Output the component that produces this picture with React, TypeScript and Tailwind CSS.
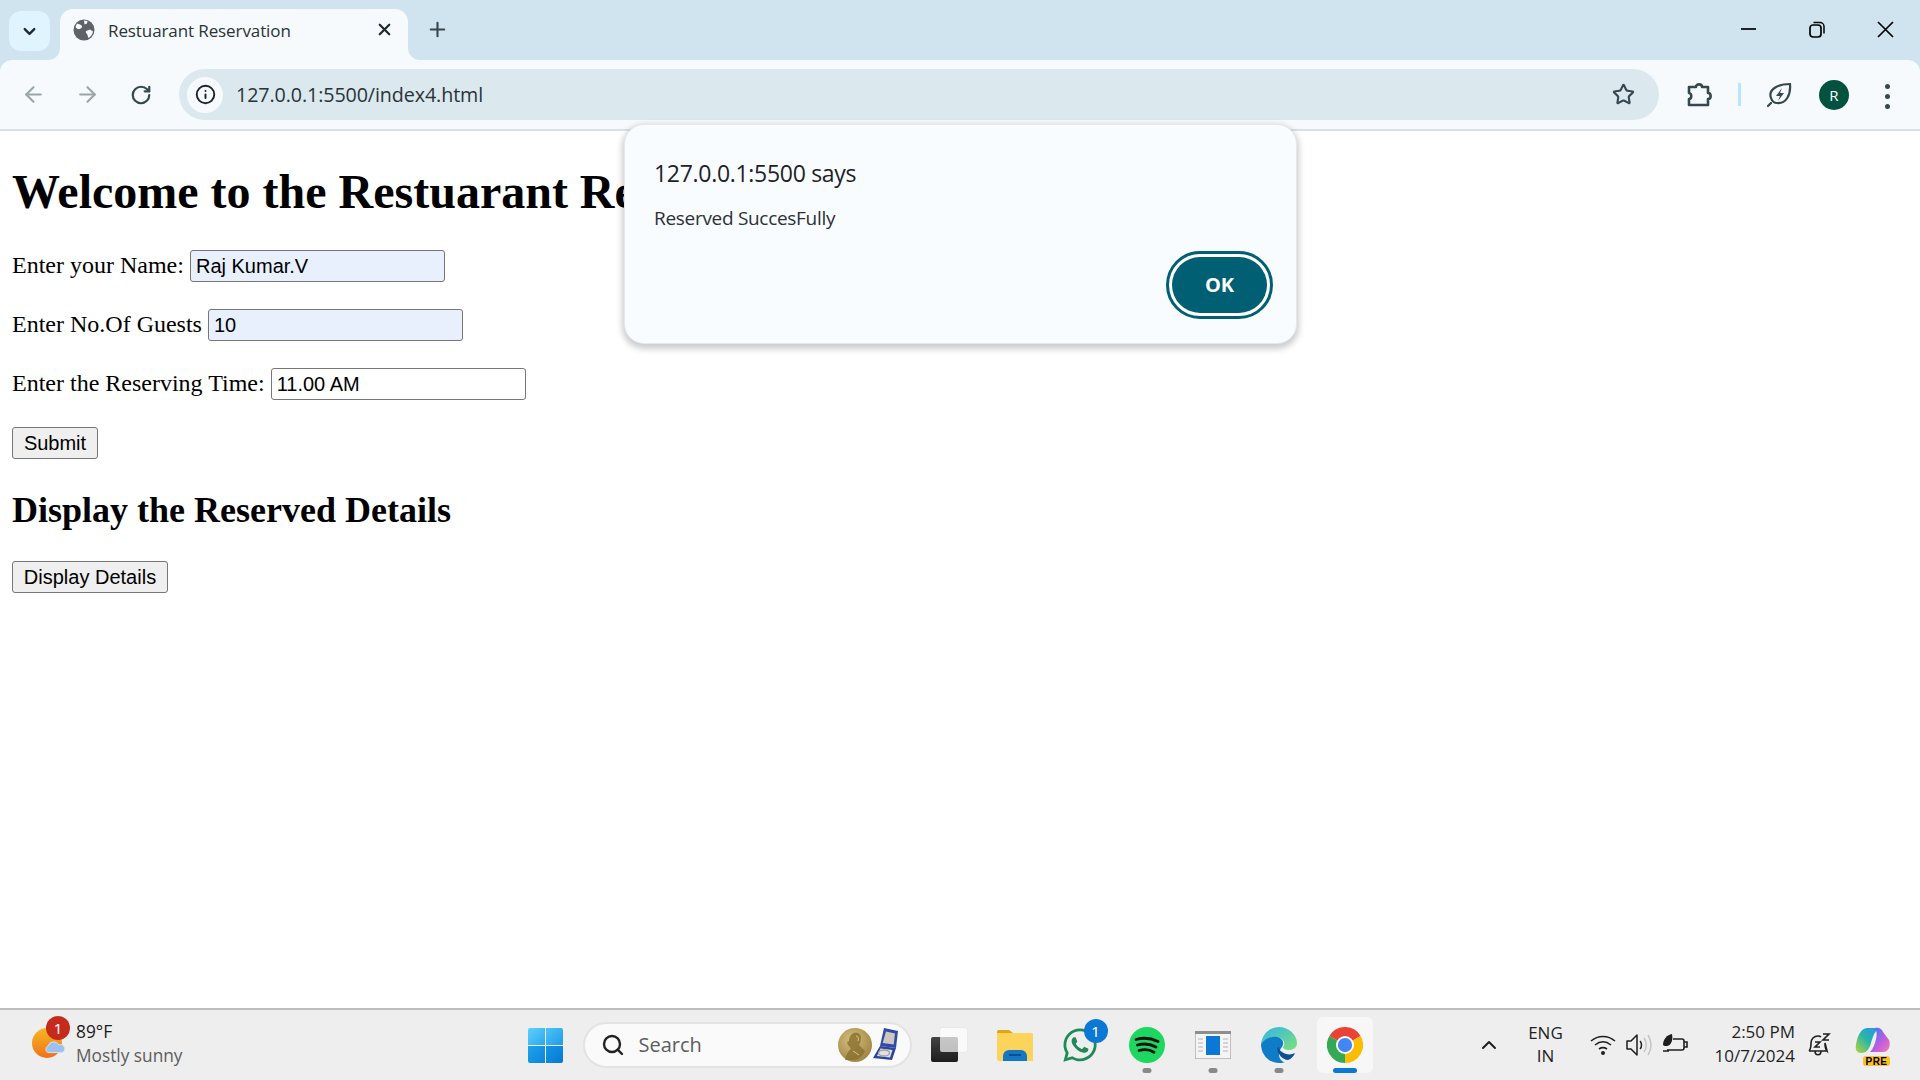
import React from "react";
import { ArrowLeft, ArrowRight, ChevronDown, ChevronUp, Info, Plus, RotateCw, Search, Star, X } from "lucide-react";
import { FaWhatsapp } from "react-icons/fa";

const uiFont = "font-['Open_Sans','Noto_Sans',sans-serif]";

function TabFlare({ side }: { side: "left" | "right" }) {
  return (
    <svg
      width="12"
      height="12"
      viewBox="0 0 12 12"
      className={side === "left" ? "absolute bottom-0 left-[-12px]" : "absolute bottom-0 right-[-12px]"}>
      {side === "left" ? <path d="M12 0v12H0A12 12 0 0 0 12 0z" fill="#f6fafd" /> : <path d="M0 0v12h12A12 12 0 0 1 0 0z" fill="#f6fafd" />}
    </svg>
  );
}

function Favicon() {
  return (
    <svg width="22" height="22" viewBox="0 0 22 22">
      <circle cx="11" cy="11" r="10.500" fill="#5f6368" />
      <path d="M4 4.500c2 1 3 .5 4.500 2s-.5 3-2 3.500-3-.5-4-2zM13 12l4-1.500 3 2c-.5 3-2 5-4.500 6.500-1-1-.5-3-1.500-4s-1.500-2-1-3zM11 1.500l3.500.5-.5 2.500-2.500 1z" fill="#f6fafd" />
    </svg>
  );
}

function TabStrip() {
  return (
    <div className="flex h-[60px] shrink-0 bg-[#cfe4ef]">
      <div className="mt-[11px] ml-[9px] flex h-[40px] w-[41px] items-center justify-center rounded-[12px] bg-[#dff4fe]">
        <ChevronDown size={19} strokeWidth={3} className="text-[#1f2a30]" />
      </div>
      <div className="relative mt-[9px] ml-[10px] flex h-[51px] w-[348px] items-start rounded-t-[13px] bg-[#f6fafd] pt-[10px] pl-[13px]">
        <TabFlare side="left" />
        <TabFlare side="right" />
        <Favicon />
        <span className={`ml-[13px] mt-[1px] text-[17px] leading-[22px] tracking-[-0.1px] text-[#2a3338] ${uiFont}`}>Restuarant Reservation</span>
        <X size={19} strokeWidth={2.800} className="ml-auto mr-[14px] mt-[1px] text-[#1f2a30]" />
      </div>
      <Plus size={23} strokeWidth={2.200} className="ml-[18px] mt-[18px] text-[#37474f]" />
      <div className="ml-auto mr-[24px] flex items-start gap-[47px] pt-[19px]">
        <svg width="21" height="21" viewBox="0 0 21 21">
          <path d="M2 10h15" stroke="#000" strokeWidth="1.700" />
        </svg>
        <svg width="21" height="21" viewBox="0 0 21 21">
          <rect x="3" y="6" width="11" height="12" rx="3" fill="none" stroke="#000" strokeWidth="1.700" />
          <path d="M6.500 3.500h6.500a4 4 0 0 1 4 4v7" fill="none" stroke="#000" strokeWidth="1.500" />
        </svg>
        <svg width="21" height="21" viewBox="0 0 21 21">
          <path d="M3 3l15 15M18 3L3 18" stroke="#000" strokeWidth="1.700" />
        </svg>
      </div>
    </div>
  );
}

function Toolbar() {
  return (
    <div className="flex h-[71px] shrink-0 items-start rounded-t-[12px] border-b-2 border-[#d5e2e8] bg-[#f6fafd] pl-[21px]">
      <ArrowLeft size={25} strokeWidth={2} className="mt-[22px] text-[#9ba6aa]" />
      <ArrowRight size={25} strokeWidth={2} className="ml-[29px] mt-[22px] text-[#9ba6aa]" />
      <RotateCw size={22} strokeWidth={2.400} className="ml-[30px] mt-[24px] text-[#37474f]" />
      <div className="ml-[27px] mt-[9px] flex h-[51px] w-[1480px] items-center rounded-full bg-[#dbe9ee] pl-[8px]">
        <div className="flex h-[36px] w-[36px] items-center justify-center rounded-full bg-[#f6fafd]">
          <Info size={21} strokeWidth={2.200} className="text-[#1d2528]" />
        </div>
        <span className={`ml-[13px] text-[19.7px] tracking-[-0.1px] text-[#2a3338] ${uiFont}`}>127.0.0.1:5500/index4.html</span>
        <Star size={23} strokeWidth={2.200} className="ml-auto mr-[24px] text-[#37474f]" />
      </div>
      <svg width="28" height="28" viewBox="0 0 28 28" className="ml-[26px] mt-[20px]">
        <path d="M4 7h7c0-3.500 6-3.500 6 0h6v6c3.500 0 3.500 6 0 6v6H4v-6c3 0 3-6 0-6z" fill="none" stroke="#37474f" strokeWidth="2.600" strokeLinejoin="round" />
      </svg>
      <div className="ml-[25px] mt-[23px] h-[23px] w-[3px] bg-[#b9e6fb]" />
      <svg width="26" height="26" viewBox="0 0 26 26" className="ml-[26px] mt-[21px]">
        <path d="M4 17C1 9 10 3 23 3c1 11-4 20-13 19-3 0-5-2-6-5zM1 25l3-3" fill="none" stroke="#37474f" strokeWidth="2.200" strokeLinecap="round" />
        <path d="M15 7l-6 8h4l-2 5 6-8h-4z" fill="#37474f" />
      </svg>
      <div className="ml-[26px] mt-[20px] flex h-[30px] w-[30px] items-center justify-center rounded-full bg-[#02523f] text-[15px] text-white">
        <span className={uiFont}>R</span>
      </div>
      <div className="ml-[36px] mt-[24px] flex flex-col gap-[5px]">
        <div className="h-[5px] w-[5px] rounded-full bg-[#37474f]" />
        <div className="h-[5px] w-[5px] rounded-full bg-[#37474f]" />
        <div className="h-[5px] w-[5px] rounded-full bg-[#37474f]" />
      </div>
    </div>
  );
}

function FormRow({ label, value, filled }: { label: string; value: string; filled?: boolean }) {
  return (
    <div className="mb-[27px] flex h-[32px] items-center gap-[6px] text-[24px]">
      <span className="mb-[2px]">{label}</span>
      <input
        readOnly
        defaultValue={value}
        className={`h-[32px] w-[255px] rounded-[3px] border border-[#767676] px-[5px] font-['Liberation_Sans',sans-serif] text-[20px] text-black ${filled ? "bg-[#e8f0fe]" : "bg-white"}`}
      />
    </div>
  );
}

function Page() {
  return (
    <div className="relative min-h-0 flex-1 bg-white pl-[12px] font-['Liberation_Serif',serif] text-black">
      <h1 className="mb-[31px] mt-[33px] text-[48px] leading-[55px] font-bold">Welcome to the Restuarant Reservation</h1>
      <FormRow label="Enter your Name:" value="Raj Kumar.V" filled />
      <FormRow label="Enter No.Of Guests" value="10" filled />
      <FormRow label="Enter the Reserving Time:" value="11.00 AM" />
      <button className="block h-[32px] w-[86px] rounded-[3px] border border-[#767676] bg-[#efefef] font-['Liberation_Sans',sans-serif] text-[20px]">Submit</button>
      <h2 className="mb-[30px] mt-[31px] text-[36px] leading-[41px] font-bold">Display the Reserved Details</h2>
      <button className="block h-[32px] w-[156px] rounded-[3px] border border-[#767676] bg-[#efefef] font-['Liberation_Sans',sans-serif] text-[20px]">Display Details</button>
    </div>
  );
}

function AlertDialog() {
  return (
    <div className={`absolute left-[624px] top-[124px] h-[220px] w-[673px] rounded-[20px] border border-[#e3e8ea] bg-[#f9fcff] pl-[29px] shadow-[0_3px_6px_2px_rgba(0,0,0,0.2)] ${uiFont}`}>
      <div className="mt-[32px] text-[23px] leading-[32px] font-medium tracking-[-0.3px] text-[#1c2225]">127.0.0.1:5500 says</div>
      <div className="mt-[16px] text-[19px] leading-[26px] tracking-[-0.3px] text-[#2a3135]">Reserved SuccesFully</div>
      <div className="absolute right-[23px] top-[126px] flex h-[68px] w-[107px] items-center justify-center rounded-full border-[3px] border-[#005f73] bg-white">
        <div className="flex h-[56px] w-[95px] items-center justify-center rounded-full bg-[#005f73] text-[20px] font-bold text-white">OK</div>
      </div>
    </div>
  );
}

function Weather() {
  return (
    <div className="mb-[2px] ml-[32px] flex">
      <div className="relative h-[48px] w-[36px]">
        <div className="absolute left-0 top-[8px] h-[30px] w-[30px] rounded-full bg-gradient-to-b from-[#f5b823] to-[#f0701a]" />
        <svg width="22" height="12" viewBox="0 0 22 12" className="absolute left-[12px] top-[21px]">
          <path d="M4 11.500a3.500 3.500 0 0 1 0-6.500A6 6 0 0 1 15 4a4 4 0 0 1 3 7.500z" fill="#9cc1f0" stroke="#cfe0f6" strokeWidth="1" />
        </svg>
        <div className="absolute left-[14px] top-[-4px] flex h-[24px] w-[24px] items-center justify-center rounded-full bg-[#c42b1c] text-[15px] text-white">1</div>
      </div>
      <div className={`ml-[8px] ${uiFont}`}>
        <div className="text-[17.300px] leading-[24px] text-[#1b1b1b]">89°F</div>
        <div className="text-[17.300px] leading-[24px] text-[#5d5d5d]">Mostly sunny</div>
      </div>
    </div>
  );
}

function StartLogo() {
  return (
    <div className="ml-[345px] grid h-[35px] w-[35px] grid-cols-2 gap-[1px]">
      <div className="rounded-tl-[2px] bg-gradient-to-br from-[#5ed0fb] to-[#27a8ee]" />
      <div className="rounded-tr-[2px] bg-gradient-to-br from-[#4ac4f7] to-[#1f9ce8]" />
      <div className="rounded-bl-[2px] bg-gradient-to-br from-[#1fa3ea] to-[#0a84dc]" />
      <div className="rounded-br-[2px] bg-gradient-to-br from-[#1596e4] to-[#0678d2]" />
    </div>
  );
}

function Medal() {
  return (
    <svg width="64" height="36" viewBox="0 0 64 36">
      <defs>
        <radialGradient id="gold" cx="0.4" cy="0.35" r="0.75">
          <stop offset="0" stopColor="#d6bf7e" />
          <stop offset="1" stopColor="#9a7f3c" />
        </radialGradient>
      </defs>
      <circle cx="21" cy="18" r="17" fill="url(#gold)" />
      <path d="M20 6c4-1 7 1 7 5 0 3-1 5-2 7l6 6c-2 5-6 8-10 9H11c1-5 3-9 6-11-1-2-2-3-3-4l-1-3 2-1c0-4 2-7 5-8z" fill="#8a6f30" opacity="0.800" />
      <path d="M22 9c2 0 3 2 2 5M19 24l6 4" fill="none" stroke="#d9c588" strokeWidth="1" />
      <path d="M50 1l14 3-2 17-16-2z" fill="#2f4aa8" />
      <path d="M52 4.500l9 2-1.300 11-11-1.500z" fill="#cfc6bd" />
      <path d="M46 19l16 2-4 12-19-2z" fill="#2b45a0" />
      <path d="M46.500 21.500l12 1.500-2.500 7.500-13-1.500z" fill="#dfe2e6" />
      <ellipse cx="50" cy="26" rx="5.500" ry="3" fill="none" stroke="#a39f92" strokeWidth="1.300" />
    </svg>
  );
}

function SearchBox() {
  return (
    <div className="ml-[20px] flex h-[46px] w-[329px] items-center rounded-full border-2 border-[#e3e3e3] bg-[#fafafa] pl-[16px] pr-[12px]">
      <Search size={24} strokeWidth={2.400} className="text-[#222]" />
      <span className={`ml-[14px] text-[20px] text-[#5d5d5d] ${uiFont}`}>Search</span>
      <div className="ml-auto">
        <Medal />
      </div>
    </div>
  );
}

function TaskView() {
  return (
    <div className="relative ml-[19px] h-[34px] w-[36px]">
      <div className="absolute bottom-0 left-0 h-[25px] w-[27px] rounded-[2px] bg-gradient-to-b from-[#444] to-[#1d1d1d]" />
      <div className="absolute right-0 top-0 h-[24px] w-[27px] rounded-[2px] bg-white/70 shadow-[0_0_1px_rgba(0,0,0,0.2)]" />
    </div>
  );
}

function FolderIcon() {
  return (
    <svg width="36" height="34" viewBox="0 0 36 34" className="ml-[30px]">
      <path d="M0 4a2 2 0 0 1 2-2h10l4 3h-16z" fill="#e3a50f" />
      <path d="M0 5h35a1 1 0 0 1 1 1v27H2a2 2 0 0 1-2-2z" fill="#fcd45c" />
      <path d="M6 33v-5a6 6 0 0 1 6-6h12a6 6 0 0 1 6 6v5z" fill="#1577c4" />
      <rect x="12" y="26" width="12" height="2" fill="#0a4f8e" />
    </svg>
  );
}

function Whatsapp() {
  return (
    <div className="relative ml-[28px] h-[38px] w-[38px]">
      <FaWhatsapp size={38} className="text-[#1f8a58]" />
      <div className="absolute right-[-9px] top-[-7px] flex h-[24px] w-[24px] items-center justify-center rounded-full bg-[#0a78d4] text-[15px] text-white">1</div>
    </div>
  );
}

function RunningDot({ offset }: { offset: string }) {
  return <div className={`absolute left-1/2 h-[5px] w-[9px] -translate-x-1/2 rounded-full bg-[#888] ${offset}`} />;
}

function SpotifyIcon() {
  return (
    <div className="relative ml-[30px] h-[36px] w-[36px]">
      <svg width="36" height="36" viewBox="0 0 36 36">
        <circle cx="18" cy="18" r="18" fill="#1ed760" />
        <path d="M7 12.500c7-2 15-1.500 22 2M8.500 18c6-1.700 13-1 18.500 2M10 23.500c5-1.300 11-.8 15 1.700" fill="none" stroke="#111" strokeWidth="2.800" strokeLinecap="round" />
      </svg>
      <RunningDot offset="bottom-[-10px]" />
    </div>
  );
}

function PanelApp() {
  return (
    <div className="relative ml-[30px] h-[28px] w-[36px]">
      <svg width="36" height="28" viewBox="0 0 36 28">
        <rect width="36" height="28" fill="#f4f4f4" stroke="#8c8c8c" strokeWidth="1" />
        <rect width="36" height="3" fill="#8e8e8e" />
        <rect x="11" y="5" width="14" height="19" fill="#0a78d4" />
        <path d="M3 8h5M3 12h5M3 16h5M3 20h5M28 8h5M28 12h5M28 16h5M28 20h5" stroke="#c9c9c9" strokeWidth="1.500" />
      </svg>
      <RunningDot offset="bottom-[-14px]" />
    </div>
  );
}

function EdgeIcon() {
  return (
    <div className="relative ml-[30px] h-[36px] w-[36px]">
      <svg width="36" height="36" viewBox="0 0 36 36">
        <defs>
          <linearGradient id="edgeTop" x1="0" y1="0" x2="1" y2="1">
            <stop offset="0" stopColor="#2fb6e8" />
            <stop offset="1" stopColor="#7fe07a" />
          </linearGradient>
        </defs>
        <path d="M0 17C1 7 9 0 18 0c10 0 18 8 18 16 0 5-4 7-8 7-3 0-6-1-6-3 2-2 2-7-3-9-6-2-14 0-19 6z" fill="url(#edgeTop)" />
        <path d="M0 17c4-6 11-8 16-7 5 1 8 5 5 10-3 3-5 9 0 14 1 1 2 1 3 1-2 1-4 1-6 1C8 36 0 28 0 17z" fill="#0f7cc8" />
        <path d="M16 21c1 7 6 12 11 12 3-1 6-4 7-7-4 2-9 2-13-1-2-1-3-3-3-5z" fill="#0d4f96" />
      </svg>
      <RunningDot offset="bottom-[-10px]" />
    </div>
  );
}

function ChromeIcon() {
  return (
    <svg width="36" height="36" viewBox="0 0 48 48">
      <path d="M24 24L3.200 12A24 24 0 0 1 44.800 12z" fill="#ea4335" />
      <path d="M24 24L44.800 12A24 24 0 0 1 24 48z" fill="#fbbc04" />
      <path d="M24 24L24 48A24 24 0 0 1 3.200 12z" fill="#34a853" />
      <circle cx="24" cy="24" r="12" fill="#fff" />
      <circle cx="24" cy="24" r="9.500" fill="#4285f4" />
    </svg>
  );
}

function ChromeTask() {
  return (
    <div className="relative ml-[20px] flex h-[56px] w-[56px] items-center justify-center rounded-[6px] bg-[#f7f7f7]">
      <ChromeIcon />
      <div className="absolute bottom-0 left-[16px] h-[5px] w-[24px] rounded-full bg-[#0a78d4]" />
    </div>
  );
}

function Tray() {
  return (
    <div className={`ml-auto flex items-center ${uiFont}`}>
      <ChevronUp size={24} strokeWidth={2} className="text-[#1f1f1f]" />
      <div className="ml-[24px] mb-[2px] w-[40px] text-center text-[17px] leading-[23px] text-[#1f1f1f]">
        <div>ENG</div>
        <div>IN</div>
      </div>
      <svg width="26" height="22" viewBox="0 0 26 22" className="ml-[25px]">
        <path d="M1 7c7-6 17-6 24 0M5 11c5-4 11-4 16 0M9 15c3-2 5-2 8 0" fill="none" stroke="#1f1f1f" strokeWidth="1.600" />
        <circle cx="13" cy="19" r="2" fill="#1f1f1f" />
      </svg>
      <svg width="26" height="24" viewBox="0 0 26 24" className="ml-[10px]">
        <path d="M1 8h4l6-6v20l-6-6H1z" fill="none" stroke="#1f1f1f" strokeWidth="1.500" strokeLinejoin="round" />
        <path d="M14 8c2 2 2 6 0 8" fill="none" stroke="#1f1f1f" strokeWidth="1.500" />
        <path d="M18 5c3 4 3 10 0 14M22 2c4 6 4 14 0 20" fill="none" stroke="#c4c4c4" strokeWidth="1.500" />
      </svg>
      <svg width="26" height="24" viewBox="0 0 26 24" className="ml-[10px]">
        <path d="M5 17h15a2 2 0 0 0 2-2V8a2 2 0 0 0-2-2H11M1 18h6M22 9h3v5h-3" fill="none" stroke="#1f1f1f" strokeWidth="1.600" />
        <path d="M1 12C1 6 5 2 10 1c1 5 0 11-5 12-2 0-3 0-4-1z" fill="#1f1f1f" />
      </svg>
      <div className="ml-[26px] mb-[2px] text-right text-[17px] leading-[24px] text-[#1f1f1f]">
        <div>2:50 PM</div>
        <div>10/7/2024</div>
      </div>
      <svg width="24" height="26" viewBox="0 0 24 26" className="ml-[12px]">
        <path d="M2 19c2-2 2-4 2-8 0-4 3-7 7-7 1 0 2 0 3 1M18 11c0 4 0 6 2 8zM2 19h18M8 19c0 5 6 5 6 0" fill="none" stroke="#1f1f1f" strokeWidth="1.600" />
        <path d="M8 10h5l-5 5h5M16 2h6l-6 6h6" fill="none" stroke="#1f1f1f" strokeWidth="1.600" />
      </svg>
      <div className="relative ml-[24px] mr-[29px] h-[36px] w-[36px]">
        <svg width="36" height="30" viewBox="0 0 36 30">
          <defs>
            <linearGradient id="coLeft" x1="0" y1="1" x2="1" y2="0">
              <stop offset="0" stopColor="#b6d534" />
              <stop offset="0.500" stopColor="#28b6a8" />
              <stop offset="1" stopColor="#2b8ff0" />
            </linearGradient>
            <linearGradient id="coRight" x1="0" y1="0" x2="1" y2="1">
              <stop offset="0" stopColor="#2b7df0" />
              <stop offset="0.600" stopColor="#c05ce0" />
              <stop offset="1" stopColor="#f57ca8" />
            </linearGradient>
          </defs>
          <path d="M12 1h12c-4 3-6 8-8 15-2 7-5 10-10 10-4 0-6-3-5-8C2 10 6 1 12 1z" fill="url(#coLeft)" />
          <path d="M20 1c4-1 7 1 8 4l6 8c2 5 0 12-6 12h-13c3-3 5-8 6-13 1-4 1-8-1-11z" fill="url(#coRight)" />
        </svg>
        <div className="absolute bottom-[-3px] left-[8px] flex h-[10px] w-[27px] items-center justify-center rounded-[3px] bg-[#fbc02d] font-['Liberation_Sans',sans-serif] text-[10px] font-bold tracking-[0.5px] text-black">PRE</div>
      </div>
    </div>
  );
}

function Taskbar() {
  return (
    <div className="flex h-[72px] shrink-0 items-center border-t-2 border-[#bdbdbd] bg-[#eeeeee]">
      <Weather />
      <StartLogo />
      <SearchBox />
      <TaskView />
      <FolderIcon />
      <Whatsapp />
      <SpotifyIcon />
      <PanelApp />
      <EdgeIcon />
      <ChromeTask />
      <Tray />
    </div>
  );
}

export default function App() {
  return (
    <div className="relative flex h-screen w-screen flex-col overflow-hidden bg-[#cfe4ef]">
      <TabStrip />
      <Toolbar />
      <Page />
      <Taskbar />
      <AlertDialog />
    </div>
  );
}
